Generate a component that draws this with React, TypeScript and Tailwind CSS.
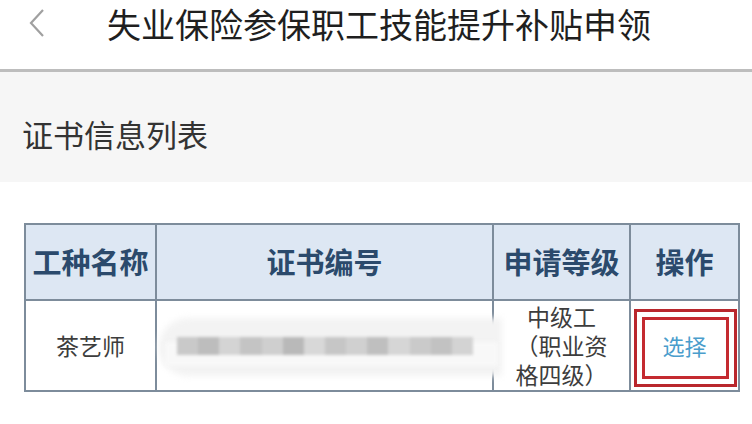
const FONT = { fontFamily: '"Noto Sans CJK SC", "Noto Sans", sans-serif' };

function BlurredNumber() {
  const shades = ["#c9c9c9", "#bdbdbd", "#d4d4d4", "#c4c4c4", "#cfcfcf", "#b9b9b9", "#d8d8d8", "#c6c6c6", "#d0d0d0", "#bfbfbf", "#d6d6d6", "#cacaca", "#c2c2c2", "#d3d3d3"];
  return (
    <div className="relative h-[87px] w-full">
      <div className="absolute left-[2px] right-[-10px] top-[16px] h-[58px] rounded-l-full bg-[#f3f3f3] blur-[3px]" />
      <div className="absolute left-[8px] right-[-6px] top-[40px] h-[24px] bg-[#f8f8f8] blur-[2px]" />
      <div className="absolute left-[20px] top-[35px] flex h-[18px] w-[296px] blur-[1.5px]">
        {shades.map((c, i) => (
          <div key={i} className="h-full flex-1" style={{ background: c }} />
        ))}
      </div>
    </div>
  );
}

export default function App() {
  return (
    <div className="h-[424px] w-[752px] overflow-hidden bg-white" style={FONT}>
      <header className="h-[72px] border-b-[3px] border-[#bdbdbd] bg-white">
        <div className="flex h-[46px] items-center">
          <span className="ml-[28px] w-[56px] leading-none">
            <svg width="17" height="28" viewBox="0 0 17 28" fill="none">
              <path d="M15 1 L3 14 L15 27" stroke="#a0a0a0" strokeWidth="2.2" />
            </svg>
          </span>
          <h1 className="ml-[23px] text-[34px] font-normal text-[#1f1f1f]">
            失业保险参保职工技能提升补贴申领
          </h1>
        </div>
      </header>

      <div className="h-[110px] bg-[#f6f6f6] px-[22px] pt-[42px]">
        <span className="text-[31px] leading-[40px] text-[#333]">证书信息列表</span>
      </div>

      <div className="px-[24px] pt-[41px]">
        <table className="w-[714px] table-fixed border-collapse">
          <colgroup>
            <col className="w-[131px]" />
            <col className="w-[337px]" />
            <col className="w-[137px]" />
            <col className="w-[109px]" />
          </colgroup>
          <thead>
            <tr className="h-[76px] bg-[#dde7f3]">
              {["工种名称", "证书编号", "申请等级", "操作"].map((h) => (
                <th key={h} className="border-2 border-[#7d8c9b] p-0 text-center text-[29px] font-bold text-[#2b4a6c]">
                  {h}
                </th>
              ))}
            </tr>
          </thead>
          <tbody>
            <tr className="h-[91px] bg-white">
              <td className="border-2 border-[#7d8c9b] text-center text-[23px] text-[#3d3d3d]">茶艺师</td>
              <td className="relative border-2 border-[#7d8c9b] p-0">
                <BlurredNumber />
              </td>
              <td className="border-2 border-[#7d8c9b] p-0 text-center text-[23px] text-[#3d3d3d]">
                <div className="flex flex-col items-center">
                  <div className="h-[29px] leading-[29px]">中级工</div>
                  <div className="h-[29px] leading-[29px]">（职业资</div>
                  <div className="h-[29px] leading-[29px]">格四级）</div>
                </div>
              </td>
              <td className="relative border-2 border-[#7d8c9b] p-0 text-center">
                <span className="text-[22px] text-[#4a9dcc]">选择</span>
                <div className="absolute left-[3px] right-[1px] top-[8px] bottom-[3px] border-[3px] border-[#b9272d] p-[5px]">
                  <div className="h-full w-full border-[3px] border-[#c42a30]" />
                </div>
              </td>
            </tr>
          </tbody>
        </table>
      </div>
    </div>
  );
}
